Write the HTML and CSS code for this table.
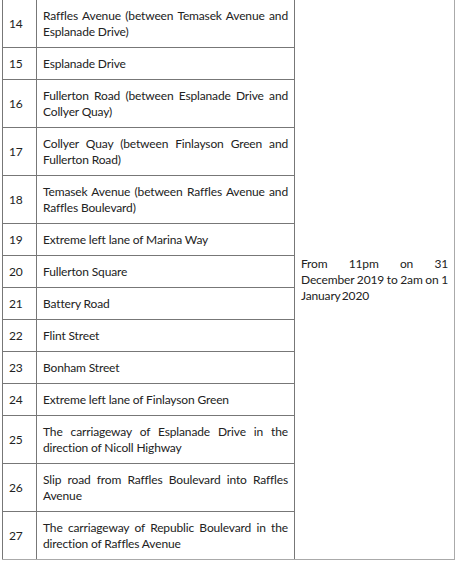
FILE: index.html
```html
<!DOCTYPE html>
<html>
<head>
<meta charset="utf-8">
<link rel="stylesheet" href="styles.css">
</head>
<body>
<table class="closures">
  <colgroup>
    <col class="c-no">
    <col class="c-road">
    <col class="c-time">
  </colgroup>
  <tbody>
    <tr><td class="no">14</td><td class="road">Raffles Avenue (between Temasek Avenue and Esplanade Drive)</td>
      <td class="time" rowspan="14">From 11pm on 31 <span class="keep">December 2019 to 2am on 1</span> January 2020</td></tr>
    <tr><td class="no">15</td><td class="road">Esplanade Drive</td></tr>
    <tr><td class="no">16</td><td class="road">Fullerton Road (between Esplanade Drive and Collyer Quay)</td></tr>
    <tr><td class="no">17</td><td class="road">Collyer Quay (between Finlayson Green and Fullerton Road)</td></tr>
    <tr><td class="no">18</td><td class="road">Temasek Avenue (between Raffles Avenue and Raffles Boulevard)</td></tr>
    <tr><td class="no">19</td><td class="road">Extreme left lane of Marina Way</td></tr>
    <tr><td class="no">20</td><td class="road">Fullerton Square</td></tr>
    <tr><td class="no">21</td><td class="road">Battery Road</td></tr>
    <tr><td class="no">22</td><td class="road">Flint Street</td></tr>
    <tr><td class="no">23</td><td class="road">Bonham Street</td></tr>
    <tr><td class="no">24</td><td class="road">Extreme left lane of Finlayson Green</td></tr>
    <tr><td class="no">25</td><td class="road">The carriageway of Esplanade Drive in the direction of Nicoll Highway</td></tr>
    <tr><td class="no">26</td><td class="road">Slip road from Raffles Boulevard into Raffles Avenue</td></tr>
    <tr><td class="no">27</td><td class="road">The carriageway of Republic Boulevard in the direction of Raffles Avenue</td></tr>
  </tbody>
</table>
</body>
</html>
```

FILE: styles.css
```css
html, body {
  margin: 0;
  padding: 0;
  background: #fff;
}
body {
  padding: 0 0 0 2px;
  font-family: Lato, "Open Sans", sans-serif;
  font-size: 12px;
  line-height: 16px;
  letter-spacing: -0.15px;
  color: #222;
}
.closures {
  border-collapse: collapse;
  width: 452px;
  margin-top: -1px;
  table-layout: fixed;
  border: 1px solid #aaa;
}
.c-no { width: 34px; }
.c-road { width: 258px; }
.c-time { width: 160px; }
.closures td {
  border: 1px solid #777;
  padding: 8px 6px 7px 6px;
  vertical-align: middle;
  text-align: justify;
}
.closures td.time {
  word-spacing: -1.5px;
  border-right-color: #aaa;
  border-bottom-color: #aaa;
}
.time .keep {
  white-space: nowrap;
}
.closures tr:last-child td {
  border-bottom-color: #aaa;
}
```
